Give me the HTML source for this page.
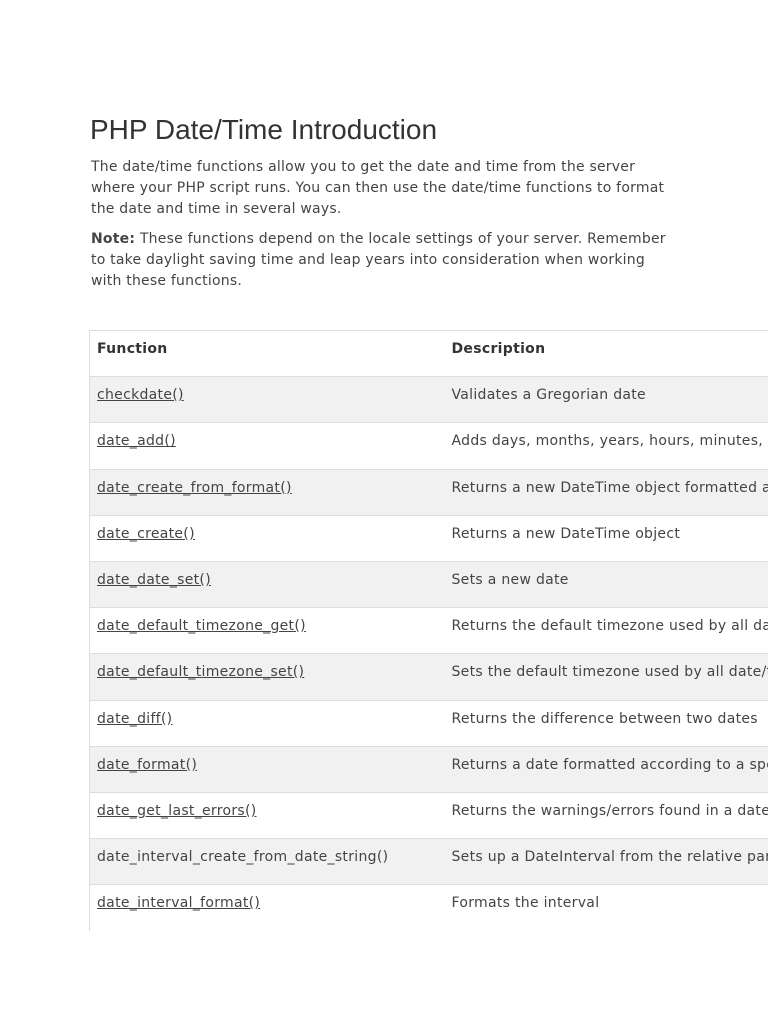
<!DOCTYPE html>
<html><head><meta charset="utf-8"><style>
body{margin:0;background:#fff;width:768px;height:1024px;overflow:hidden;position:relative;font-family:"DejaVu Sans","Liberation Sans",sans-serif;color:#333}
h1{position:absolute;left:90px;top:110px;margin:0;font:28px/40px "Liberation Sans",sans-serif;color:#333;white-space:nowrap}
.p{position:absolute;left:91px;font-size:14px;line-height:21px;white-space:nowrap;letter-spacing:0.22px;color:#444}
table{position:absolute;left:89px;top:330px;border-collapse:collapse;width:760px;font-size:14px;letter-spacing:0.3px;color:#444;table-layout:fixed;border-left:1px solid #ddd}
td,th{height:46px;padding:0 0 0 7px;text-align:left;vertical-align:top;padding-top:10px;box-sizing:border-box;border-top:1px solid #ddd;white-space:nowrap;overflow:hidden}
th{font-weight:bold;color:#333}
tr{height:46.2px}
tr:nth-child(even){background:#f1f1f1}
col.c1{width:355px}
a{color:#444;text-decoration:underline}
.wrap{position:absolute;left:0;top:0;width:768px;height:931px;overflow:hidden}
</style></head><body>
<h1>PHP Date/Time Introduction</h1>
<div class="p" style="top:157px">The date/time functions allow you to get the date and time from the server<br>where your PHP script runs. You can then use the date/time functions to format<br>the date and time in several ways.</div>
<div class="p" style="top:229px"><b>Note:</b> These functions depend on the locale settings of your server. Remember<br>to take daylight saving time and leap years into consideration when working<br>with these functions.</div>
<div class="wrap">
<table>
<colgroup><col class="c1"><col></colgroup>
<tr><th>Function</th><th>Description</th></tr>
<tr><td><a>checkdate()</a></td><td>Validates a Gregorian date</td></tr>
<tr><td><a>date_add()</a></td><td>Adds days, months, years, hours, minutes, and seconds to a date</td></tr>
<tr><td><a>date_create_from_format()</a></td><td>Returns a new DateTime object formatted according to a format</td></tr>
<tr><td><a>date_create()</a></td><td>Returns a new DateTime object</td></tr>
<tr><td><a>date_date_set()</a></td><td>Sets a new date</td></tr>
<tr><td><a>date_default_timezone_get()</a></td><td>Returns the default timezone used by all date/time functions</td></tr>
<tr><td><a>date_default_timezone_set()</a></td><td>Sets the default timezone used by all date/time functions</td></tr>
<tr><td><a>date_diff()</a></td><td>Returns the difference between two dates</td></tr>
<tr><td><a>date_format()</a></td><td>Returns a date formatted according to a specified format</td></tr>
<tr><td><a>date_get_last_errors()</a></td><td>Returns the warnings/errors found in a date string</td></tr>
<tr><td>date_interval_create_from_date_string()</td><td>Sets up a DateInterval from the relative parts of the string</td></tr>
<tr><td><a>date_interval_format()</a></td><td>Formats the interval</td></tr>
</table>
</div>
</body></html>
